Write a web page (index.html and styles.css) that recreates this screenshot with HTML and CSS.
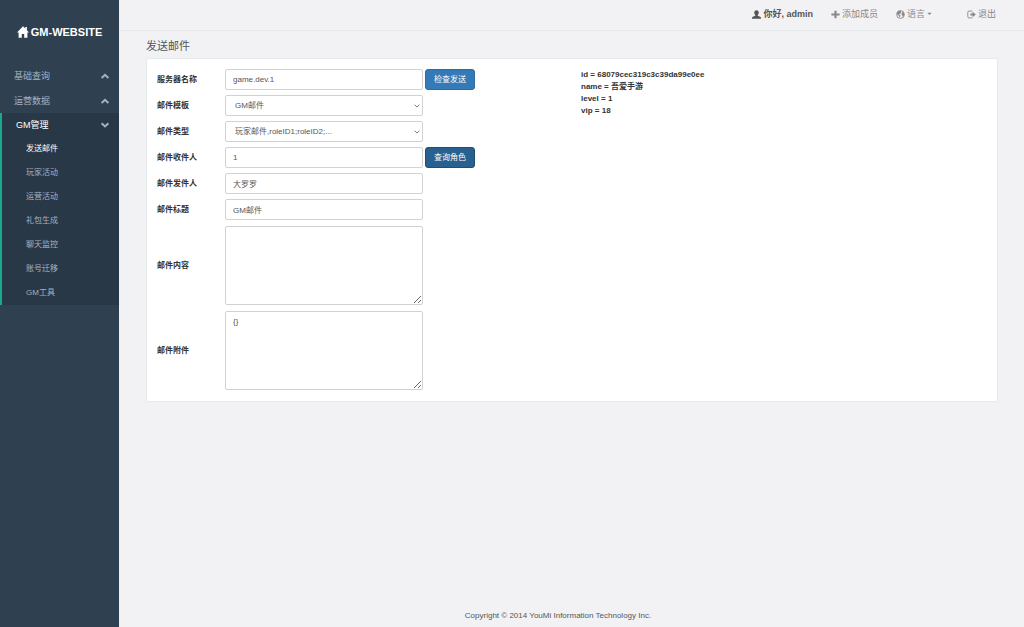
FILE: index.html
```html
<!DOCTYPE html>
<html lang="zh-CN">
<head>
<meta charset="utf-8">
<meta name="viewport" content="width=device-width, initial-scale=1">
<title>GM-WEBSITE</title>
<link rel="stylesheet" href="styles.css">
</head>
<body>
<div class="app">
  <aside class="sidebar">
    <a class="brand" href="#">
      <svg class="brand-icon" viewBox="0 0 12 12" aria-hidden="true"><path d="M6 0.3 0 6.4h1.6V11.7H4.8V8h2.4v3.7h3.2V6.4H12L9.9 4.2V1H8.3v1.6z"/></svg>
      <span>GM-WEBSITE</span>
    </a>
    <nav>
      <button class="group" type="button"><span>基础查询</span><svg class="chevron" viewBox="0 0 10 8" aria-hidden="true"><path d="M1.6 6 5 2.8 8.4 6"/></svg></button>
      <button class="group" type="button"><span>运营数据</span><svg class="chevron" viewBox="0 0 10 8" aria-hidden="true"><path d="M1.6 6 5 2.8 8.4 6"/></svg></button>
      <div class="open">
        <button class="group" type="button" aria-expanded="true"><span>GM管理</span><svg class="chevron" viewBox="0 0 10 8" aria-hidden="true"><path d="M1.6 2.2 5 5.4 8.4 2.2"/></svg></button>
        <ul class="submenu">
          <li><a class="current" href="#">发送邮件</a></li>
          <li><a href="#">玩家活动</a></li>
          <li><a href="#">运营活动</a></li>
          <li><a href="#">礼包生成</a></li>
          <li><a href="#">聊天监控</a></li>
          <li><a href="#">账号迁移</a></li>
          <li><a href="#">GM工具</a></li>
        </ul>
      </div>
    </nav>
  </aside>

  <div class="page">
    <header class="topbar">
      <span class="hello"><svg class="icon" viewBox="0 0 10 10" aria-hidden="true"><path d="M5 0.2c1.7 0 2.5 1.1 2.5 2.6 0 1.3-.5 2.2-1.1 2.8v.9L9 7.5c.6.2 1 .6 1 1.2v1H0v-1c0-.6.4-1 1-1.2l2.6-1v-.9C3 5 2.5 4.100 2.500 2.800 2.500 1.300 3.300.2 5 .2z"/></svg>你好, admin</span>
      <a class="add" href="#"><svg class="icon" viewBox="0 0 10 10" aria-hidden="true"><path d="M3.8.7h2.400v3.100H9.600v2.400H6.200V9.300H3.800V6.200H.4V3.800h3.400z"/></svg>添加成员</a>
      <a class="lang" href="#"><svg class="icon" viewBox="0 0 10 10" aria-hidden="true"><circle class="line" cx="5" cy="5" r="4.300"/><path d="M1.200 2.500 3 .9l2.700 0-.5 1.200.7.7-1.200 1.300-1.500.3.9 1.100 1 .7-.9 2.300-.7-1.900L2 5.300.9 4.500zM6.500 3 8.300 2.200 9.300 5 8.300 7.200 7.300 7.200l-.3-1.300L6 4.800z"/></svg>语言<svg class="caret" viewBox="0 0 6 4" aria-hidden="true"><path d="M.5.5h5L3 3.300z"/></svg></a>
      <a class="logout" href="#"><svg class="icon" viewBox="0 0 10 10" aria-hidden="true"><path class="line" d="M6 1.200H2.200Q.9 1.200.9 2.500v5q0 1.300 1.300 1.300H6"/><path d="M3.800 4h2.400V2L9.800 5 6.200 8V6H3.800z"/></svg>退出</a>
    </header>

    <main class="content">
      <h1 class="title">发送邮件</h1>
      <section class="panel">
        <form class="form">
          <div class="row"><label for="server">服务器名称</label><input class="field" id="server" type="text" value="game.dev.1"><button class="action" type="button">检查发送</button></div>
          <div class="row"><label for="template">邮件模板</label>
            <div class="select"><select class="field" id="template"><option>GM邮件</option></select><svg class="arrow" viewBox="0 0 6 4" aria-hidden="true"><path d="M.6.7 3 3.100 5.400.7"/></svg></div></div>
          <div class="row"><label for="kind">邮件类型</label>
            <div class="select"><select class="field" id="kind"><option>玩家邮件,roleID1;roleID2;...</option></select><svg class="arrow" viewBox="0 0 6 4" aria-hidden="true"><path d="M.6.7 3 3.100 5.400.7"/></svg></div></div>
          <div class="row"><label for="receiver">邮件收件人</label><input class="field" id="receiver" type="text" value="1"><button class="action pressed" type="button">查询角色</button></div>
          <div class="row"><label for="sender">邮件发件人</label><input class="field" id="sender" type="text" value="大罗罗"></div>
          <div class="row"><label for="subject">邮件标题</label><input class="field" id="subject" type="text" value="GM邮件"></div>
          <div class="row tall"><label for="body">邮件内容</label><textarea class="field" id="body"></textarea></div>
          <div class="row tall"><label for="attachment">邮件附件</label><textarea class="field" id="attachment">{}</textarea></div>
        </form>
        <div class="role">
          <div>id = 68079cec319c3c39da99e0ee</div>
          <div>name = 吾爱手游</div>
          <div>level = 1</div>
          <div>vip = 18</div>
        </div>
      </section>
    </main>

    <footer class="footer">Copyright © 2014 YouMi Information Technology Inc.</footer>
  </div>
</div>
</body>
</html>
```
FILE: styles.css
```css
* { box-sizing: border-box; }

body {
  margin: 0;
  background: #f2f2f5;
  color: #333;
  font: 8px/12px "Liberation Sans", "Noto Sans CJK SC", sans-serif;
}

button, input, select, textarea { font: inherit; color: inherit; }
a { color: inherit; text-decoration: none; }
svg { flex: none; }

.app { display: flex; min-height: 100vh; }

/* Sidebar */
.sidebar { flex: none; width: 119px; background: #2f4050; color: #a7b1c2; }
.brand {
  display: flex;
  align-items: center;
  justify-content: center;
  gap: 2px;
  height: 63px;
  color: #fff;
  font-size: 11px;
  font-weight: bold;
}
.brand-icon { width: 12px; height: 12px; fill: currentColor; }
.group {
  display: flex;
  align-items: center;
  justify-content: space-between;
  width: 100%;
  height: 25px;
  padding: 0 9px 0 14px;
  border: 0;
  background: none;
  font-size: 9px;
  cursor: pointer;
}
.chevron { width: 10px; height: 8px; fill: none; stroke: currentColor; stroke-width: 2; }
.open { border-left: 2px solid #19aa8d; background: #293846; }
.open .group { height: 24px; color: #fff; }
.open .chevron { color: #a7b1c2; }
.submenu { margin: 0; padding: 0; list-style: none; }
.submenu a { display: block; padding-left: 24px; line-height: 24px; }
.submenu .current { color: #fff; }

/* Top bar */
.page { flex: 1; display: flex; flex-direction: column; min-width: 0; }
.topbar {
  display: flex;
  align-items: center;
  justify-content: flex-end;
  gap: 18px;
  height: 31px;
  padding: 0 28px 2px 0;
  border-bottom: 1px solid #e7eaec;
  color: #888;
  font-size: 9px;
}
.topbar > * { display: flex; align-items: center; gap: 2px; }
.hello { color: #555; font-weight: bold; }
.lang { margin-right: 17px; }
.icon { width: 9px; height: 9px; fill: currentColor; }
.line { fill: none; stroke: currentColor; stroke-width: 1; }
.caret { width: 5px; height: 4px; fill: currentColor; }

/* Mail form */
.content { flex: 1; padding: 7px 26px 20px 27px; }
.title { margin: 0; color: #555; font-size: 11px; font-weight: normal; line-height: 17px; }
.panel {
  display: grid;
  grid-template-columns: 1fr 1fr;
  margin-top: 3px;
  padding: 10px 0 11px;
  border: 1px solid #e7eaec;
  border-radius: 2px;
  background: #fff;
}
.form { display: flex; flex-direction: column; gap: 5px; padding-left: 10px; }
.row { display: flex; align-items: center; gap: 2px; }
.row label { flex: none; width: 66px; font-weight: bold; }
.tall { margin-top: 1px; }
.field {
  width: 198px;
  height: 21px;
  margin: 0;
  padding: 3px 7px;
  border: 1px solid #d2d2d2;
  border-radius: 2px;
  background: #fff;
  color: #555;
}
textarea.field { height: 79px; padding-top: 4px; resize: both; }
.select { display: grid; align-items: center; }
.select > * { grid-area: 1 / 1; }
.select .field { padding-left: 9px; appearance: none; }
.arrow {
  width: 6px;
  height: 4px;
  margin-right: 3px;
  justify-self: end;
  fill: none;
  stroke: #777;
  pointer-events: none;
}
.action {
  height: 21px;
  padding: 0 8px;
  border: 1px solid #2e6da4;
  border-radius: 3px;
  background: #337ab7;
  color: #fff;
  cursor: pointer;
}
.pressed { border-color: #204d74; background: #286090; }
.role { padding-left: 9px; font-weight: bold; }

.footer { padding: 0 27px 5px 0; text-align: center; color: #555; }
```
